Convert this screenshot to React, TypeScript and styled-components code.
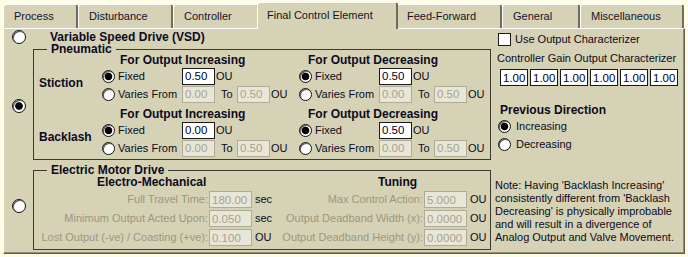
import React from 'react';
import styled, { createGlobalStyle, css } from 'styled-components';

const BG = '#d6d2b5';
const FONT = '"Liberation Sans", Arial, sans-serif';

const GlobalStyle = createGlobalStyle`
  html, body { margin: 0; padding: 0; background: #fdfde6; }
  body { font-family: ${FONT}; font-size: 11px; line-height: 13px; color: #0b0b1e; }
  * { box-sizing: border-box; }
`;

const boldText = css`
  font-weight: bold;
  font-size: 12px;
`;

const Frame = styled.div`
  width: 688px;
  height: 257px;
  padding: 2px 3px 0 3px;
`;

const TabBar = styled.div`
  display: flex;
  align-items: flex-end;
  height: 26px;
`;

const Tab = styled.div<{ $w: number; $active?: boolean }>`
  position: relative;
  z-index: ${(p) => (p.$active ? 2 : 1)};
  flex: none;
  width: ${(p) => p.$w}px;
  height: ${(p) => (p.$active ? 27 : 24)}px;
  margin: ${(p) => (p.$active ? '0 -2px -1px -2px' : '0')};
  padding-left: ${(p) => (p.$active ? 9 : 10)}px;
  padding-bottom: ${(p) => (p.$active ? 2 : 1)}px;
  display: flex;
  align-items: center;
  background: ${BG};
  border-top: 1px solid #ffffff;
  border-left: 1px solid #ffffff;
  border-right: 2px solid #6f6d5d;
  border-radius: 3px 3px 0 0;
  white-space: nowrap;
  color: #14142a;
`;

const Panel = styled.div`
  width: 682px;
  height: 226px;
  display: flex;
  background: ${BG};
  border-top: 1px solid #ffffff;
  border-left: 1px solid #ffffff;
  border-right: 1px solid #5d5b4d;
  border-bottom: 1px solid #5d5b4d;
  box-shadow: inset -1px -1px 0 #8f8c78;
`;

const LeftArea = styled.div`
  width: 487px;
  flex: none;
  display: grid;
  grid-template-columns: 29px 458px;
  grid-template-rows: 16px auto auto;
  align-content: start;
`;

const RadioCell = styled.div<{ $shift?: number }>`
  display: flex;
  justify-content: center;
  align-self: center;
  margin-top: ${(p) => p.$shift ?? 0}px;
`;

const Radio = styled.span<{ $on?: boolean; $size?: number }>`
  flex: none;
  display: inline-block;
  width: ${(p) => p.$size ?? 13}px;
  height: ${(p) => p.$size ?? 13}px;
  border-radius: 50%;
  border: 1px solid #111111;
  box-shadow: inset 1px 1px 0 #5a5a5a;
  background: #ffffff;
  ${(p) =>
    p.$on &&
    css`
      background: radial-gradient(circle, #000 0 3.4px, #fff 4.2px);
    `}
`;

const Check = styled.span`
  flex: none;
  display: inline-block;
  width: 13px;
  height: 13px;
  border: 1px solid #1a1a1a;
  background: #ffffff;
`;

const TitleRow = styled.div`
  display: flex;
  align-items: center;
  padding-left: 17px;
  ${boldText};
`;

const Group = styled.fieldset<{ $gapTop?: number }>`
  margin: ${(p) => p.$gapTop ?? 0}px 0 0 0;
  padding: 0;
  min-width: 0;
  border: 1px solid #3b3a31;
`;

const Legend = styled.legend`
  margin-left: 13px;
  padding: 0 4px;
  height: 9px;
  line-height: 9px;
  ${boldText};
  white-space: nowrap;
`;

const PneuBody = styled.div`
  display: flex;
  flex-direction: column;
  gap: 5px;
  padding-bottom: 2px;
`;

const Block = styled.div`
  display: grid;
  grid-template-columns: 68px 197px 1fr;
  grid-template-rows: 13px 18px 18px;
`;

const RowLabel = styled.div`
  grid-column: 1;
  grid-row: 2 / 4;
  align-self: center;
  margin-bottom: 4px;
  padding-left: 5px;
  ${boldText};
`;

const ColHead = styled.div<{ $col: number; $indent: number }>`
  grid-row: 1;
  grid-column: ${(p) => p.$col};
  padding-left: ${(p) => p.$indent}px;
  ${boldText};
  line-height: 13px;
  white-space: nowrap;
`;

const OptRow = styled.div<{ $col: number; $row: number }>`
  grid-column: ${(p) => p.$col};
  grid-row: ${(p) => p.$row};
  display: flex;
  align-items: center;
  white-space: nowrap;
`;

const OptLabel = styled.span<{ $w?: number }>`
  flex: none;
  width: ${(p) => (p.$w ? `${p.$w}px` : 'auto')};
  display: flex;
  align-items: center;
  gap: 3px;
`;

const Field = styled.input<{ $w: number }>`
  flex: none;
  width: ${(p) => p.$w}px;
  height: 17px;
  margin: 0;
  padding: 0 0 0 2px;
  font: 11.5px ${FONT};
  color: #00002e;
  background: #ffffff;
  border: 1px solid #1a1a1a;
  outline: none;
  &:disabled {
    background: #e8e6d7;
    border-color: #aeab96;
    color: #a6a38f;
  }
`;

const Unit = styled.span<{ $pad?: number }>`
  padding-left: ${(p) => p.$pad ?? 1}px;
  white-space: nowrap;
`;

const ToLabel = styled.span`
  flex: none;
  width: 22px;
  padding-left: 6px;
`;

const ElecBody = styled.div`
  display: grid;
  grid-template-columns: 175px 43px 22px 150px 43px 1fr;
  grid-template-rows: 15px 19px 19px 19px;
  align-items: center;
  padding-bottom: 2px;
`;

const ElecHead = styled.div<{ $span: string; $indent: number }>`
  grid-column: ${(p) => p.$span};
  padding-left: ${(p) => p.$indent}px;
  ${boldText};
  white-space: nowrap;
`;

const GrayLabel = styled.div`
  text-align: right;
  padding-right: 1px;
  color: #9b987f;
  white-space: nowrap;
`;

const RightArea = styled.div`
  flex: 1;
  display: flex;
  flex-direction: column;
  padding: 4px 0 9px 4px;
`;

const CheckRow = styled.div`
  display: flex;
  align-items: center;
  gap: 4px;
  margin-left: 3px;
  height: 13px;
`;

const PlainText = styled.div<{ $top: number; $left: number; $bold?: boolean }>`
  margin-top: ${(p) => p.$top}px;
  margin-left: ${(p) => p.$left}px;
  ${(p) => p.$bold && boldText};
  white-space: nowrap;
`;

const GainRow = styled.div`
  display: flex;
  gap: 2px;
  margin: 4px 0 0 5px;
`;

const DirOption = styled.div`
  display: flex;
  align-items: center;
  gap: 5px;
  height: 18px;
  margin-left: 3px;
`;

const Note = styled.div`
  margin-top: auto;
  line-height: 13px;
  white-space: nowrap;
`;

const tabs = [
  { label: 'Process', w: 75 },
  { label: 'Disturbance', w: 95 },
  { label: 'Controller', w: 86 },
  { label: 'Final Control Element', w: 141, active: true },
  { label: 'Feed-Forward', w: 106 },
  { label: 'General', w: 78 },
  { label: 'Miscellaneous', w: 104 },
];

type ColSpec = { head: string; indent: number; fixed: string; from: string; to: string };

const PneuColumn: React.FC<{ col: number; spec: ColSpec }> = ({ col, spec }) => (
  <>
    <ColHead $col={col} $indent={spec.indent}>{spec.head}</ColHead>
    <OptRow $col={col} $row={2}>
      <OptLabel $w={80}>
        <Radio $on />
        Fixed
      </OptLabel>
      <Field $w={33} readOnly value={spec.fixed} />
      <Unit>OU</Unit>
    </OptRow>
    <OptRow $col={col} $row={3}>
      <OptLabel $w={80}>
        <Radio />
        Varies From
      </OptLabel>
      <Field $w={33} disabled value={spec.from} />
      <ToLabel>To</ToLabel>
      <Field $w={33} disabled value={spec.to} />
      <Unit>OU</Unit>
    </OptRow>
  </>
);

const PneuBlock: React.FC<{ label: string; inc: string; dec: string }> = ({ label, inc, dec }) => (
  <Block>
    <RowLabel>{label}</RowLabel>
    <PneuColumn
      col={2}
      spec={{ head: 'For Output Increasing', indent: 18, fixed: inc, from: '0.00', to: '0.50' }}
    />
    <PneuColumn
      col={3}
      spec={{ head: 'For Output Decreasing', indent: 9, fixed: dec, from: '0.00', to: '0.50' }}
    />
  </Block>
);

const elecRows = [
  { l: 'Full Travel Time:', lv: '180.00', lu: 'sec', r: 'Max Control Action:', rv: '5.000' },
  { l: 'Minimum Output Acted Upon:', lv: '0.050', lu: 'sec', r: 'Output Deadband Width (x):', rv: '0.0000' },
  { l: 'Lost Output (-ve) / Coasting (+ve):', lv: '0.100', lu: 'OU', r: 'Output Deadband Height (y):', rv: '0.0000' },
];

export default function App() {
  return (
    <Frame>
      <GlobalStyle />
      <TabBar>
        {tabs.map((t) => (
          <Tab key={t.label} $w={t.w} $active={t.active}>
            {t.label}
          </Tab>
        ))}
      </TabBar>
      <Panel>
        <LeftArea>
          <RadioCell>
            <Radio $size={14} />
          </RadioCell>
          <TitleRow>Variable Speed Drive (VSD)</TitleRow>

          <RadioCell $shift={7}>
            <Radio $size={14} $on />
          </RadioCell>
          <Group>
            <Legend>Pneumatic</Legend>
            <PneuBody>
              <PneuBlock label="Stiction" inc="0.50" dec="0.50" />
              <PneuBlock label="Backlash" inc="0.00" dec="0.50" />
            </PneuBody>
          </Group>

          <RadioCell $shift={2}>
            <Radio $size={14} />
          </RadioCell>
          <Group $gapTop={6}>
            <Legend>Electric Motor Drive</Legend>
            <ElecBody>
              <ElecHead $span="1 / 4" $indent={63}>Electro-Mechanical</ElecHead>
              <ElecHead $span="4 / 7" $indent={104}>Tuning</ElecHead>
              {elecRows.map((r) => (
                <React.Fragment key={r.l}>
                  <GrayLabel>{r.l}</GrayLabel>
                  <Field $w={43} disabled value={r.lv} />
                  <Unit $pad={3}>{r.lu}</Unit>
                  <GrayLabel>{r.r}</GrayLabel>
                  <Field $w={43} disabled value={r.rv} />
                  <Unit $pad={3}>OU</Unit>
                </React.Fragment>
              ))}
            </ElecBody>
          </Group>
        </LeftArea>

        <RightArea>
          <CheckRow>
            <Check />
            Use Output Characterizer
          </CheckRow>
          <PlainText $top={6} $left={2}>Controller Gain Output Characterizer</PlainText>
          <GainRow>
            {[0, 1, 2, 3, 4, 5].map((i) => (
              <Field key={i} $w={28} readOnly value="1.00" />
            ))}
          </GainRow>
          <PlainText $top={18} $left={5} $bold>Previous Direction</PlainText>
          <DirOption>
            <Radio $on />
            Increasing
          </DirOption>
          <DirOption>
            <Radio />
            Decreasing
          </DirOption>
          <Note>
            Note: Having 'Backlash Increasing'
            <br />
            consistently different from 'Backlash
            <br />
            Decreasing' is physically improbable
            <br />
            and will result in a divergence of
            <br />
            Analog Output and Valve Movement.
          </Note>
        </RightArea>
      </Panel>
    </Frame>
  );
}
